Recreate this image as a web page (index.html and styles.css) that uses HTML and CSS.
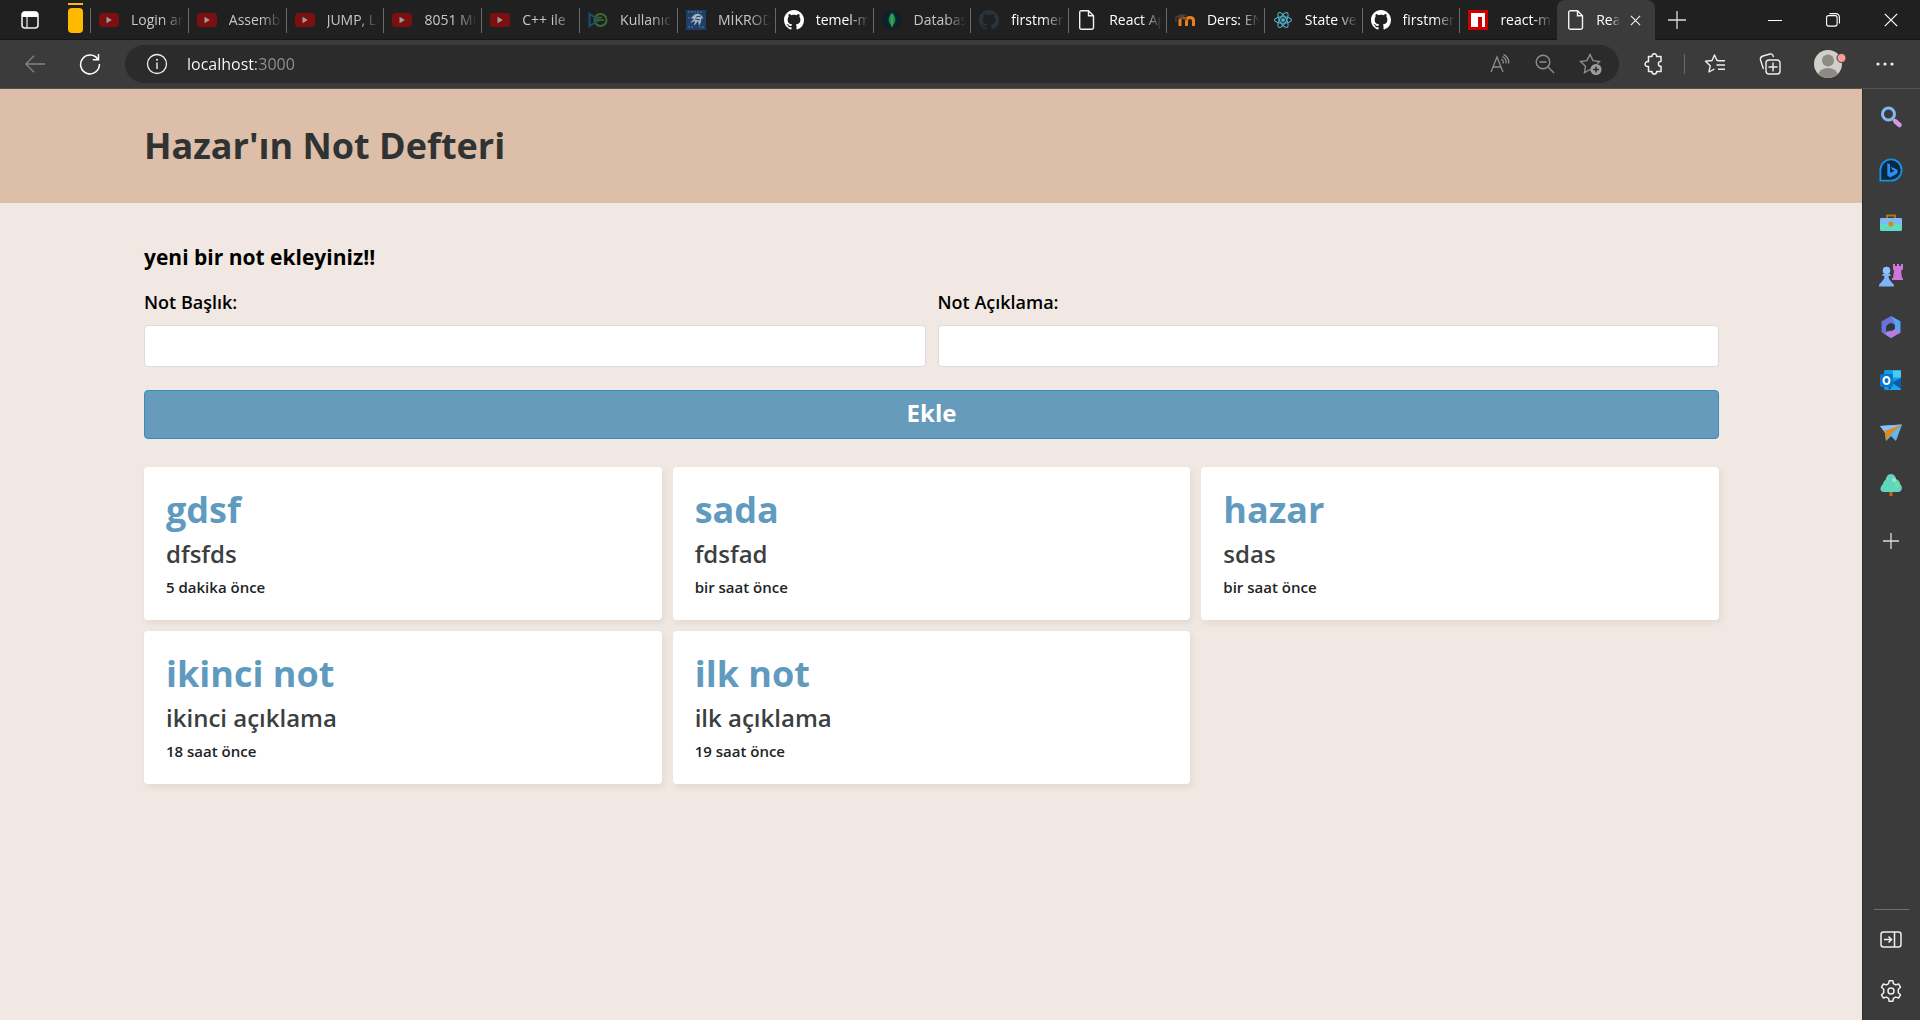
FILE: index.html
```html
<!DOCTYPE html>
<html lang="tr">
<head>
<meta charset="utf-8">
<meta name="viewport" content="width=device-width, initial-scale=1">
<title>React App</title>
<link rel="stylesheet" href="styles.css">
</head>
<body>
<svg class="sprite" aria-hidden="true">
  <symbol id="yt" viewBox="0 0 20 20"><rect y="3" width="20" height="14" rx="3.5" fill="#7c0f10"/><path d="M7.5 6.8v6.4l5.3-3.2z" fill="#a59a9a"/></symbol>
  <symbol id="github" viewBox="0 0 16 16"><path fill="currentColor" d="M8 0C3.58 0 0 3.58 0 8c0 3.54 2.29 6.53 5.47 7.59.4.07.55-.17.55-.38 0-.19-.01-.82-.01-1.49-2.01.37-2.53-.49-2.69-.94-.09-.23-.48-.94-.82-1.13-.28-.15-.68-.52-.01-.53.63-.01 1.08.58 1.23.82.72 1.21 1.87.87 2.33.66.07-.52.28-.87.51-1.07-1.78-.2-3.64-.89-3.64-3.95 0-.87.31-1.59.82-2.15-.08-.2-.36-1.02.08-2.12 0 0 .67-.21 2.2.82.64-.18 1.32-.27 2-.27s1.36.09 2 .27c1.53-1.04 2.2-.82 2.2-.82.44 1.1.16 1.92.08 2.12.51.56.82 1.27.82 2.15 0 3.07-1.87 3.75-3.65 3.95.29.25.54.73.54 1.48 0 1.07-.01 1.93-.01 2.2 0 .21.15.46.55.38A8.01 8.01 0 0 0 16 8c0-4.42-3.58-8-8-8z"/></symbol>
  <symbol id="page" viewBox="0 0 20 20"><path fill="none" stroke="#f2f2f2" stroke-width="1.4" d="M4.5.8h7l5 5v11.6a1.8 1.8 0 0 1-1.8 1.8H4.5a1.8 1.8 0 0 1-1.8-1.8V2.6A1.8 1.8 0 0 1 4.5.8zm7 0v5h5"/></symbol>
</svg>

<header class="chrome">
  <div class="tabbar">
    <button class="tab-menu" aria-label="Sekme eylemleri"><svg width="20" height="20" viewBox="0 0 20 20"><rect x="2" y="2" width="16" height="16" rx="3" fill="none" stroke="#eee" stroke-width="1.6"/><path fill="#fff" d="M2 4a2.5 2.5 0 0 1 2.5-2.5h11A2.5 2.5 0 0 1 18 4v3H2z"/><path d="M7 7v11" stroke="#eee" stroke-width="1.2"/></svg></button>
    <button class="tab-group" aria-label="Sekme grubu"><svg width="15" height="30" viewBox="0 0 15 30"><path d="M0 1h15" stroke="#ffb900" stroke-width="2"/><rect y="5" width="15" height="25" rx="4" fill="#ffb900"/></svg></button>
    <nav class="tabs" aria-label="Sekmeler">
      <a class="tab" href="#"><svg><use href="#yt"/></svg><span>Login and</span></a>
      <a class="tab" href="#"><svg><use href="#yt"/></svg><span>Assembly</span></a>
      <a class="tab" href="#"><svg><use href="#yt"/></svg><span>JUMP, LO</span></a>
      <a class="tab" href="#"><svg><use href="#yt"/></svg><span>8051 Mik</span></a>
      <a class="tab" href="#"><svg><use href="#yt"/></svg><span>C++ ile</span></a>
      <a class="tab" href="#"><svg viewBox="0 0 20 20" fill="none" stroke-width="2"><circle cx="12.5" cy="10" r="6" stroke="#3e6b35"/><path d="M1.5 4v12L11 10z" stroke="#1d4f70"/><path d="M8 10h8M9 7.500h5" stroke="#3e6b35" stroke-width="1.500"/></svg><span>Kullanıcı</span></a>
      <a class="tab" href="#"><svg viewBox="0 0 20 20"><path fill="#1d3f68" d="M0 0h20v20H0z"/><path stroke="#57799f" d="M2 2h14M2 17h5M2 8h4M13 17h5" stroke-dasharray="2 1"/><path fill="#a5b4c2" d="M8 5c4-3 9 0 9 4l-2-1c1 3-1 6-2 8l-1-5-4 5 1-5-5 2 4-4-3-1z"/><path stroke="#1d3f68" d="m10 7 5-1m-6 3 5 1" /></svg><span>MİKRODE</span></a>
      <a class="tab bright" href="#"><svg><use href="#github"/></svg><span>temel-mo</span></a>
      <a class="tab" href="#"><svg viewBox="0 0 20 20"><circle cx="10" cy="10" r="10" fill="#10202a"/><path d="M10 2.500c5 5.500 4 10 0 13.500-4-3.500-5-8 0-13.500z" fill="#169447"/><path d="M10 5v12" stroke="#67a77c"/></svg><span>Database</span></a>
      <a class="tab bright" href="#"><svg class="faded"><use href="#github"/></svg><span>firstmern</span></a>
      <a class="tab bright" href="#"><svg><use href="#page"/></svg><span>React App</span></a>
      <a class="tab bright" href="#"><svg viewBox="0 0 20 20" fill="none"><path d="M5 16V9M11.500 16v-5.500c0-4 7-4 7 0V16" stroke="#ef7d1a" stroke-width="3"/><path d="M5 9c1-2 5-2 6.500 1" stroke="#8c5427" stroke-width="3"/><path d="m0 7 6-3 6 1-6 3z" fill="#4d4140"/><path d="M1 7v5" stroke="#5b504c"/></svg><span>Ders: ENF</span></a>
      <a class="tab bright" href="#"><svg viewBox="0 0 20 20" fill="none" stroke="#52b5cc" stroke-width="1.100"><ellipse cx="10" cy="10" rx="8.500" ry="3.300"/><ellipse cx="10" cy="10" rx="8.500" ry="3.300" transform="rotate(60 10 10)"/><ellipse cx="10" cy="10" rx="8.500" ry="3.300" transform="rotate(120 10 10)"/><circle cx="10" cy="10" r="1.300" fill="#52b5cc"/></svg><span>State ve</span></a>
      <a class="tab bright" href="#"><svg><use href="#github"/></svg><span>firstmern</span></a>
      <a class="tab bright" href="#"><svg viewBox="0 0 20 20"><path fill="#c00" d="M0 0h20v20H0z"/><path fill="#fff" d="M3 3h14v14h-3V7h-4v10H3z"/></svg><span>react-mo</span></a>
      <a class="tab bright active" href="#" aria-current="page"><svg><use href="#page"/></svg><span>React</span><i class="close"><svg viewBox="0 0 12 12"><path d="m1 1 10 10M11 1 1 11" stroke="#eee" stroke-width="1.300"/></svg></i></a>
    </nav>
    <button class="new-tab" aria-label="Yeni sekme"><svg width="18" height="18" viewBox="0 0 18 18"><path d="M9 0v18M0 9h18" stroke="#ddd" stroke-width="1.300"/></svg></button>
    <div class="window-controls">
      <button aria-label="Küçült"><svg width="14" height="14" viewBox="0 0 14 14"><path d="M0 7.500h14" stroke="#fff"/></svg></button>
      <button aria-label="Önceki boyut"><svg width="14" height="14" viewBox="0 0 14 14" fill="none" stroke="#fff" stroke-width="1.100"><rect x=".6" y="2.600" width="10.500" height="10.500" rx="2"/><path d="M3.500.6h6.400a3.500 3.500 0 0 1 3.500 3.500v6.400"/></svg></button>
      <button aria-label="Kapat"><svg width="14" height="14" viewBox="0 0 14 14"><path d="m.8.8 12.400 12.400M13.200.8.8 13.200" stroke="#fff" stroke-width="1.200"/></svg></button>
    </div>
  </div>

  <div class="toolbar">
    <button class="icon-button" aria-label="Geri"><svg width="20" height="18" viewBox="0 0 20 18"><path d="M9 .7.8 9 9 17.300M1 9h19" fill="none" stroke="#858585" stroke-width="1.300"/></svg></button>
    <button class="icon-button" aria-label="Yenile"><svg width="22" height="22" viewBox="0 0 22 22"><path d="M19 6.500A9.400 9.400 0 1 0 20.400 11M19.500 1v5.700h-5.700" fill="none" stroke="#fff" stroke-width="1.500"/></svg></button>
    <div class="address">
      <button class="site-info" aria-label="Site bilgileri"><svg width="22" height="22" viewBox="0 0 22 22"><circle cx="11" cy="11" r="9.500" fill="none" stroke="#eee" stroke-width="1.300"/><path d="M11 9.500v6.500" stroke="#eee" stroke-width="1.400"/><circle cx="11" cy="6.700" r="1" fill="#eee"/></svg></button>
      <input class="url" type="text" value="localhost:3000" aria-label="Adres">
      <button class="icon-button" aria-label="Sesli oku"><svg width="20" height="20" viewBox="0 0 20 20" fill="none" stroke="#8e8e8e" stroke-width="1.300"><path d="M1 18 7 3l6 15M3 13h8M11.500 5c1.500 1 2 2.500 1.600 4.500M12.500 2.500c3 1.500 4 4 3.500 7M13.500.5c4 2 5.500 5 5.200 9"/></svg></button>
      <button class="icon-button" aria-label="Uzaklaştır"><svg width="20" height="20" viewBox="0 0 20 20" fill="none" stroke="#8e8e8e" stroke-width="1.400"><circle cx="8" cy="8" r="6.800"/><path d="m13 13 6 6M4.500 8h7"/></svg></button>
      <button class="icon-button" aria-label="Sık kullanılanlara ekle"><svg width="23" height="23" viewBox="0 0 23 23"><path d="m12 17-1-.5-5.500 3.200 1-6.400L1.500 8.500l6.400-.9L11 1.500l3 6.100 6.500.9-2.200 2.200" fill="none" stroke="#8e8e8e" stroke-width="1.400"/><circle cx="17" cy="16.500" r="5.500" fill="#9e9e9e"/><path d="M17 13.500v6M14 16.500h6" stroke="#2b2b2b" stroke-width="1.500"/></svg></button>
    </div>
    <div class="tools">
      <button class="icon-button" aria-label="Uzantılar"><svg width="22" height="22" viewBox="0 0 22 22"><path d="M5.500 3.500H9c-.4-3.700 5-3.700 4.600 0H18v5c-3.500-.5-3.500 5.300 0 4.800v5.200h-4.400c.4 3.400-5 3.400-4.600 0H5.500v-5c-4.500 1-4.500-5.700 0-4.800z" fill="none" stroke="#eee" stroke-width="1.500" stroke-linejoin="round"/></svg></button>
      <span class="divider"></span>
      <button class="icon-button" aria-label="Sık kullanılanlar"><svg width="22" height="22" viewBox="0 0 22 22" fill="none" stroke="#eee" stroke-width="1.400" stroke-linejoin="round"><path d="M14 7.500h-1L10.500 2 8 7.500l-6.500.8 4.700 4.400L5 19l5.500-3"/><path d="M14 7.800h7M12.500 12H21M14 16.200h7"/></svg></button>
      <button class="icon-button collections" aria-label="Koleksiyonlar"><svg width="22" height="22" viewBox="0 0 22 22" fill="none" stroke="#eee" stroke-width="1.400"><rect x="7" y="7" width="14" height="14" rx="3"/><path d="M14 9.500v9M9.500 14h9M4.500 16 1.500 7A3.500 3.500 0 0 1 4 3l7-2c2-.5 3 1 3.500 3"/></svg></button>
      <button class="avatar" aria-label="Profil"><svg width="33" height="28" viewBox="0 0 33 28"><defs><clipPath id="face"><circle cx="14" cy="14" r="14"/></clipPath></defs><g clip-path="url(#face)"><path fill="#d1cfcb" d="M0 0h28v28H0z"/><circle cx="14" cy="10.500" r="6" fill="#8d8984"/><ellipse cx="14" cy="26" rx="10" ry="8" fill="#8d8984"/></g><circle cx="27.500" cy="8" r="4.500" fill="#ff9c98" stroke="#3b3b3b"/></svg></button>
      <button class="icon-button more" aria-label="Ayarlar ve daha fazlası"><svg width="18" height="4" viewBox="0 0 18 4" fill="#eee"><circle cx="2" cy="2" r="1.600"/><circle cx="9" cy="2" r="1.600"/><circle cx="16" cy="2" r="1.600"/></svg></button>
    </div>
  </div>
</header>

<div class="workspace">
  <div class="page">
    <header class="page-header"><h1>Hazar'ın Not Defteri</h1></header>
    <main class="content">
      <form class="note-form">
        <h2>yeni bir not ekleyiniz!!</h2>
        <div class="fields">
          <div class="field"><label for="title">Not Başlık:</label><input id="title" type="text"></div>
          <div class="field"><label for="description">Not Açıklama:</label><input id="description" type="text"></div>
        </div>
        <button class="submit" type="button">Ekle</button>
      </form>
      <section class="notes">
        <article class="note"><h3>gdsf</h3><p>dfsfds</p><time>5 dakika önce</time></article>
        <article class="note"><h3>sada</h3><p>fdsfad</p><time>bir saat önce</time></article>
        <article class="note"><h3>hazar</h3><p>sdas</p><time>bir saat önce</time></article>
        <article class="note"><h3>ikinci not</h3><p>ikinci açıklama</p><time>18 saat önce</time></article>
        <article class="note"><h3>ilk not</h3><p>ilk açıklama</p><time>19 saat önce</time></article>
      </section>
    </main>
  </div>

  <aside class="sidebar" aria-label="Kenar çubuğu">
    <div class="apps">
      <button aria-label="Ara"><svg viewBox="0 0 24 24"><circle cx="9.500" cy="9" r="6" fill="none" stroke="#83b9f8" stroke-width="3"/><path d="m14 14 2.500 2.500" stroke="#e39a38" stroke-width="3"/><path d="m16.500 16.500 4 3.500" stroke="#cf9be8" stroke-width="4.500" stroke-linecap="round"/></svg></button>
      <button aria-label="Bing"><svg viewBox="0 0 26 26"><path d="M1.500 24.500V13A11.500 11.500 0 1 1 13 24.500z" fill="#08283d" stroke="#168fe4" stroke-width="2"/><path d="M9 5.500 12 7v9l5-2-3-1.500-1-3 6.500 3c2 3-.5 5-1.500 5.500L12 21l-3-2z" fill="#2f8df2"/></svg></button>
      <button aria-label="Araçlar"><svg viewBox="0 0 24 24"><path d="M8 9V5.500h8V9" fill="none" stroke="#a87912" stroke-width="2"/><rect x="1" y="8" width="22" height="13" rx="1.500" fill="#62dbc1"/><path d="M1 14V9.500A1.500 1.500 0 0 1 2.500 8h19A1.500 1.500 0 0 1 23 9.500V14z" fill="#7db9f5"/><circle cx="12" cy="14" r="2.600" fill="#d88b18"/></svg></button>
      <button aria-label="Oyunlar"><svg viewBox="0 0 24 24"><path d="M14 1h2v2h2V1h2v2h2V1h2v5l-2 2 1 7h1v2H13v-2h1l1-7-1-2z" fill="#cf75dc"/><circle cx="7.500" cy="7.500" r="3.800" fill="#91c0ff"/><path d="M3.500 11h8v2h-2c0 4 3 5 3.500 7 1 0 2 1 2 3.500H0C0 21 1 20 2 20c.5-2 3.500-3 3.500-7h-2z" fill="#7fb3fa"/></svg></button>
      <button aria-label="Microsoft 365"><svg viewBox="0 0 24 24"><path d="m12 1 9.500 5.500-6 4L12 8l-5 3v7l-4.500-1V6.500z" fill="#6773dd"/><path d="M21.500 6.500v11L12 23l-5-3v-3l9-3v-6L12 1z" fill="#55a4f0"/><path d="M2.500 17 7 18l10-4 4.500 3.500L12 23z" fill="#b77ae5"/><circle cx="12" cy="12" r="3.800" fill="#343434"/></svg></button>
      <button aria-label="Outlook"><svg viewBox="0 0 24 24"><rect x="5" y="2" width="17" height="20" rx="1.500" fill="#139ce2"/><path d="M14 2.500h8v7h-8z" fill="#4dc8f5"/><path d="m12 15 10-5v11H9z" fill="#065eaa"/><path d="m22 21-10-7v8h10z" fill="#20a7e8"/><rect x="1" y="6" width="13" height="13" rx="1.500" fill="#0876cf"/><ellipse cx="7.500" cy="12.500" rx="3" ry="3.500" fill="none" stroke="#fff" stroke-width="2"/></svg></button>
      <button aria-label="Bırak"><svg viewBox="0 0 24 24"><path d="M1 6 23 4.500 17 21l-5-5-5 5-1-8z" fill="#62b6f4"/><path d="M5 11 23 4.500 9 17 7 21l-1-8z" fill="#dc8d20"/><path d="m1 6 22-1.500L5 11z" fill="#8cbef8"/></svg></button>
      <button aria-label="E-ağaç"><svg viewBox="0 0 24 24"><path d="M10.500 17h3v6h-3z" fill="#bd6c10"/><path d="M12 1c3 0 5 3 5 5 3 1 4 3 4 5 4 4 1 8-2 8H5c-4 0-5-4-1-8 0-2 2-4 3-5 0-2 2-5 5-5z" fill="#61d5bd"/><circle cx="15" cy="7" r="2.200" fill="#8aeaca"/><circle cx="18" cy="12" r="2.500" fill="#7adf9d"/></svg></button>
    </div>
    <button class="add-app" aria-label="Özelleştir"><svg width="16" height="16" viewBox="0 0 16 16"><path d="M8 0v16M0 8h16" stroke="#ddd" stroke-width="1.300"/></svg></button>
    <div class="sidebar-bottom">
      <button aria-label="Kenar çubuğunu gizle"><svg viewBox="0 0 24 24" fill="none" stroke="#eee" stroke-width="1.500"><rect x="2" y="5" width="20" height="15" rx="2.500"/><path d="M15.500 5v15M5 12.500h7M9.500 9.500l3 3-3 3"/></svg></button>
      <button aria-label="Ayarlar"><svg viewBox="0 0 24 24" fill="none" stroke="#eee" stroke-width="1.500" stroke-linejoin="round"><path d="M9.600 4.600 10.200 1.700h3.600l.6 2.900 2.300 1.300 2.900-.9 1.900 3.200-2.200 2v3.600l2.200 2-1.900 3.200-2.900-.9-2.300 1.300-.6 2.900h-3.600l-.6-2.900-2.300-1.300-2.900.9-1.900-3.200 2.200-2v-3.600l-2.200-2L4.400 5l2.900.9z"/><circle cx="12" cy="12" r="3"/></svg></button>
    </div>
  </aside>
</div>
</body>
</html>
```
FILE: styles.css
```css
* {
  box-sizing: border-box;
}

body {
  margin: 0;
  min-height: 100vh;
  display: flex;
  flex-direction: column;
  font-family: "Open Sans", sans-serif;
  color: #000;
  background: #3b3b3b;
}

button {
  display: flex;
  align-items: center;
  justify-content: center;
  padding: 0;
  border: 0;
  background: none;
  font-family: inherit;
  cursor: pointer;
}

.sprite {
  display: none;
}

/* Tab strip */
.tabbar {
  display: flex;
  height: 40px;
  background: #202020;
  border-bottom: 1px solid #161616;
}

.tab-menu {
  width: 20px;
  margin-left: 20px;
}

.tab-group {
  width: 15px;
  height: 36px;
  margin: 0 7px 0 28px;
}

.tabs {
  display: grid;
  grid-template-columns: repeat(16, minmax(0, 1fr));
  flex: 1;
  min-width: 0;
}

.tab {
  display: flex;
  align-items: center;
  gap: 12px;
  height: 40px;
  padding: 0 4px 0 9px;
  color: #c4c8cb;
  font-size: 14px;
  line-height: 24px;
  text-decoration: none;
  background: linear-gradient(#6a6a6a, #6a6a6a) 0 8px / 1px 25px no-repeat;
}

.tab > svg {
  flex: none;
  width: 20px;
  height: 20px;
}

.tab span {
  flex: 1;
  overflow: hidden;
  white-space: nowrap;
  mask-image: linear-gradient(90deg, #000 60%, transparent);
}

.bright {
  color: #fff;
}

.faded {
  color: #2b333b;
}

.active {
  background: #3b3b3b;
  border-radius: 8px 8px 0 0;
  gap: 10px;
  padding-right: 14px;
}

.close {
  display: flex;
  width: 11px;
}

.new-tab {
  width: 44px;
}

.window-controls {
  display: flex;
  margin-left: 47px;
}

.window-controls button {
  width: 58px;
}

/* Navigation bar */
.toolbar {
  display: flex;
  align-items: center;
  height: 49px;
  padding-left: 13px;
  border-bottom: 1px solid #57514e;
}

.icon-button {
  flex: none;
  width: 44px;
  height: 38px;
}

.toolbar > .icon-button + .icon-button {
  margin: 0 13px 0 11px;
}

.address {
  display: flex;
  flex: 1;
  align-items: center;
  height: 38px;
  padding: 0 7px 0 21px;
  background: #2b2b2b;
  border-radius: 19px;
  gap: 1px;
}

.site-info {
  width: 22px;
  height: 22px;
}

.url {
  flex: 1;
  min-width: 0;
  height: 30px;
  margin-left: 18px;
  padding: 0;
  border: 0;
  outline: 0;
  font: 16px/24px "Open Sans", sans-serif;
  color: #fff;
  background: linear-gradient(90deg, #fff 69px, #929292 69px);
  background-clip: text;
  -webkit-background-clip: text;
  -webkit-text-fill-color: transparent;
}

.tools {
  display: flex;
  align-items: center;
  padding: 0 13px;
}

.divider {
  width: 1px;
  height: 20px;
  margin: 0 8px;
  background: #696969;
}

.collections {
  margin-left: 11px;
}

.avatar {
  width: 33px;
  margin: 0 16px 0 22px;
}

/* Area under the browser bars */
.workspace {
  display: flex;
  flex: 1;
}

.page {
  flex: 1;
  min-width: 0;
  background: #f1e8e3;
}

.page-header {
  padding: 33px 143px 33px 144px;
  background: #ddbea9;
}

h1,
h2,
h3,
p {
  margin: 0;
}

h1 {
  color: #2f3333;
  font-size: 36px;
  line-height: 48px;
  font-weight: 700;
}

.content {
  padding: 40px 143px 40px 144px;
}

h2 {
  margin-bottom: 18px;
  font-size: 21px;
  line-height: 28px;
  font-weight: 700;
}

.fields {
  display: grid;
  grid-template-columns: 1fr 1fr;
  gap: 12px;
}

.field {
  display: flex;
  flex-direction: column;
  gap: 10px;
}

.field label {
  font-size: 18px;
  line-height: 26px;
  font-weight: 600;
}

.field input {
  height: 42px;
  padding: 0 12px;
  border: 1px solid #dcdcdc;
  border-radius: 4px;
  font: 18px/26px "Open Sans", sans-serif;
  background: #fff;
}

.submit {
  width: 100%;
  height: 49px;
  margin-top: 23px;
  padding-bottom: 3px;
  border: 1px solid #3a8db8;
  border-radius: 4px;
  color: #fff;
  font-size: 24px;
  line-height: 28px;
  font-weight: 700;
  background: #669bbc;
}

.notes {
  display: grid;
  grid-template-columns: repeat(3, 1fr);
  gap: 11px;
  margin-top: 28px;
}

.note {
  padding: 20px 22px;
  border-radius: 4px;
  background: #fff;
  box-shadow: 2px 3px 6px rgba(120, 80, 60, 0.1);
}

.note h3 {
  color: #609bbf;
  font-size: 36px;
  line-height: 46px;
  font-weight: 700;
}

.note p {
  color: #3c3f3f;
  font-size: 24px;
  line-height: 42px;
  font-weight: 600;
}

.note time {
  display: block;
  color: #202424;
  font-size: 15px;
  line-height: 25px;
  font-weight: 600;
}

/* Browser side panel */
.sidebar {
  display: flex;
  flex-direction: column;
  align-items: center;
  width: 58px;
  padding: 12px 1px 13px 0;
  border-left: 1px solid #2e2e2e;
}

.sidebar button {
  width: 32px;
  height: 32px;
}

.apps {
  display: flex;
  flex-direction: column;
  justify-content: space-between;
  height: 400px;
}

.apps svg,
.sidebar-bottom svg {
  width: 24px;
  height: 24px;
}

.add-app {
  margin-top: 24px;
}

.sidebar-bottom {
  display: flex;
  flex-direction: column;
  align-items: center;
  gap: 20px;
  width: 35px;
  margin-top: auto;
  padding-top: 13px;
  border-top: 1px solid #707070;
}
```
